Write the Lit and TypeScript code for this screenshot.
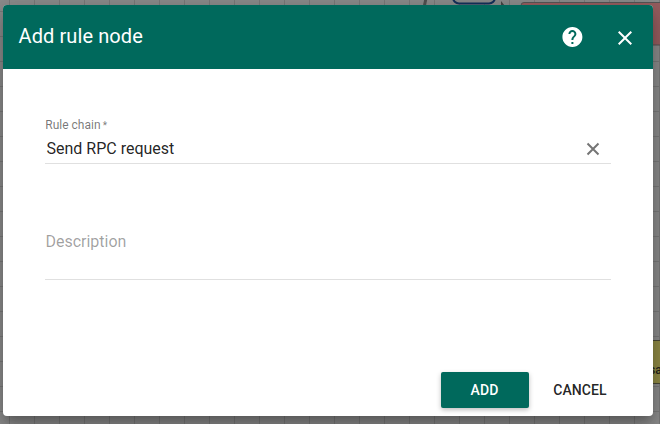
import { LitElement, html, css, svg } from "lit";
import { customElement } from "lit/decorators.js";

const closeIcon = svg`<path fill="currentColor" d="M19 6.410 17.590 5 12 10.590 6.410 5 5 6.410 10.590 12 5 17.590 6.410 19 12 13.410 17.590 19 19 17.590 13.410 12z"/>`;
const clearIcon = svg`<path fill="none" stroke="currentColor" stroke-width="2" d="m3.500 3.500 11 11m0-11-11 11"/>`;
const helpIcon = svg`<path fill="currentColor" d="M12 2C6.480 2 2 6.480 2 12s4.480 10 10 10 10-4.480 10-10S17.520 2 12 2zm1 17h-2v-2h2v2zm2.070-7.750-.9.92C13.450 12.900 13 13.500 13 15h-2v-.5c0-1.100.45-2.100 1.170-2.830l1.240-1.260c.37-.36.59-.86.59-1.410 0-1.100-.9-2-2-2s-2 .9-2 2H8c0-2.210 1.790-4 4-4s4 1.790 4 4c0 .88-.36 1.680-.93 2.250z"/>`;

@customElement("rule-canvas")
export class RuleCanvas extends LitElement {
  static styles = css`
    :host, svg { display: block; }
    text { font: 500 12px Roboto, sans-serif; fill: #24241c; }
  `;

  render() {
    return html`<svg width="660" height="424" viewBox="0 0 660 424" aria-hidden="true">
      <defs>
        <pattern id="grid" x="9" y="11" width="25" height="25" patternUnits="userSpaceOnUse">
          <path fill="#797979" d="M0 0h25v1H1v24H0z"/>
        </pattern>
      </defs>
      <rect width="660" height="424" fill="#8b8b8b"/>
      <rect width="660" height="424" fill="url(#grid)"/>
      <path d="M426-2 424 8" stroke="#505050" stroke-width="3"/>
      <rect x="453" y="-27" width="42" height="30.500" rx="6" fill="#8b8b8b" stroke="#14305a" stroke-width="2"/>
      <path d="m501 1 4 5h-4z" fill="#444"/>
      <rect x="521" y="2.500" width="150" height="42.500" rx="3" fill="#965d5f" stroke="#555" stroke-width="1"/>
      <rect x="530" y="340.500" width="150" height="43" rx="3" fill="#8f8a45" stroke="#484735"/>
      <text x="649" y="374">sa</text>
    </svg>`;
  }
}

@customElement("app-root")
export class AppRoot extends LitElement {
  static styles = css`
    :host {
      display: block;
      position: relative;
      width: 660px;
      height: 424px;
      overflow: hidden;
      font-family: Roboto, sans-serif;
      color: rgba(0, 0, 0, 0.87);
    }
    * { box-sizing: border-box; }
    svg { display: block; }
    button {
      display: grid;
      place-items: center;
      border: 0;
      padding: 0;
      background: none;
      color: inherit;
      font: inherit;
    }
    .dialog {
      position: absolute;
      left: 3px;
      top: 5px;
      width: 650px;
      height: 411px;
      display: flex;
      flex-direction: column;
      background: #fff;
      border-radius: 4px;
      overflow: hidden;
      box-shadow: 0 7px 8px -4px rgba(0, 0, 0, 0.2), 0 13px 19px 2px rgba(0, 0, 0, 0.14), 0 5px 24px 4px rgba(0, 0, 0, 0.12);
    }
    header {
      display: flex;
      align-items: center;
      height: 64px;
      flex: none;
      padding: 0 16px 0 15.500px;
      background: #00695c;
      color: #fff;
    }
    h2 {
      flex: 1;
      margin: 0;
      padding-bottom: 2px;
      font-size: 20px;
      font-weight: 400;
      letter-spacing: 0.1px;
    }
    .help { margin-right: 29px; }
    .close { padding-top: 2px; }
    .content {
      flex: 1;
      padding: 48px 42px 0;
    }
    .field {
      display: flex;
      flex-direction: column;
      border-bottom: 1px solid #e0e0e0;
    }
    .chain { height: 47px; }
    label {
      font-size: 12px;
      line-height: 16px;
      padding-left: 0.300px;
      color: rgba(0, 0, 0, 0.54);
    }
    .star { font-size: 10px; margin-left: -0.800px; }
    .value {
      display: flex;
      align-items: center;
      justify-content: space-between;
      height: 30px;
      padding: 0 9px 0 1.500px;
      font-size: 16px;
    }
    .clear { color: #757575; }
    .description {
      height: 48px;
      margin-top: 68px;
      padding-left: 0.400px;
      font-size: 16px;
      line-height: 19px;
      color: rgba(0, 0, 0, 0.38);
    }
    footer {
      display: flex;
      height: 52px;
      padding: 8px;
      justify-content: flex-end;
      gap: 8px;
    }
    .action {
      width: 88px;
      height: 36px;
      border-radius: 2px;
      font-size: 14px;
      font-weight: 500;
      letter-spacing: 0.1px;
    }
    .cancel { width: 88px; margin-right: 21px; margin-left: -1px; }
    .primary {
      padding-right: 1px;
      background: #00695c;
      color: #fff;
      box-shadow: 0 2px 5px rgba(0, 0, 0, 0.26);
    }
  `;

  render() {
    return html`
      <rule-canvas></rule-canvas>
      <section class="dialog" role="dialog">
        <header>
          <h2>Add rule node</h2>
          <button class="help" aria-label="Help"><svg width="24" height="24" viewBox="-0.4 0 24 24">${helpIcon}</svg></button>
          <button class="close" aria-label="Close"><svg width="24" height="24" viewBox="0 0 24 24">${closeIcon}</svg></button>
        </header>
        <div class="content">
          <div class="field chain">
            <label>Rule chain <span class="star">*</span></label>
            <div class="value">
              <span>Send RPC request</span>
              <button class="clear" aria-label="Clear"><svg width="18" height="18" viewBox="0 0 18 18">${clearIcon}</svg></button>
            </div>
          </div>
          <div class="field description">Description</div>
        </div>
        <footer>
          <button class="action primary">ADD</button>
          <button class="action cancel">CANCEL</button>
        </footer>
      </section>
    `;
  }
}
